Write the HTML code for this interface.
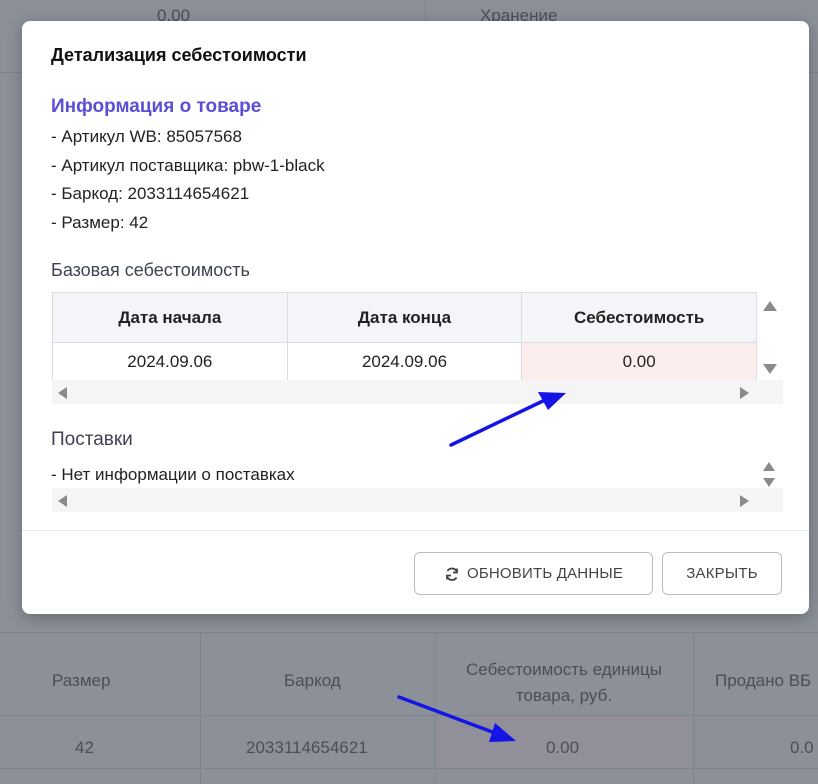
<!DOCTYPE html>
<html><head><meta charset="utf-8">
<style>
*{box-sizing:border-box;margin:0;padding:0}
body{width:818px;height:784px;overflow:hidden;position:relative;background:#8b9099;font-family:"Liberation Sans",sans-serif;color:#222}
.abs{position:absolute}
.bgt{color:#4a4f57;font-size:17px;position:absolute}
.vl{position:absolute;width:1px;background:#7e838c}
.hl{position:absolute;height:1px;background:#7e838c;left:0;width:818px}
.modal{position:absolute;left:22px;top:21px;width:787px;height:593px;background:#fff;border-radius:8px;box-shadow:0 4px 16px rgba(0,0,0,.25)}
.t{position:absolute;font-size:17px;color:#222}
table{border-collapse:collapse;position:absolute;left:30px;top:271px;width:705px;table-layout:fixed}
td,th{border:1px solid #d9dde3;text-align:center;font-size:17px}
th{background:#f3f5f8;height:50px;font-weight:bold;color:#222}
td{height:38px}
.tri{position:absolute;width:0;height:0}
.btn{position:absolute;border:1px solid #b8bec7;border-radius:6px;height:43px;top:531px;font-size:15px;color:#444;display:flex;align-items:center;justify-content:center;letter-spacing:.2px}
</style></head><body>
<div class="bgt" style="left:157px;top:6px">0.00</div>
<div class="bgt" style="left:480px;top:6px">Хранение</div>
<div class="vl" style="left:425px;top:0;height:30px"></div>
<div class="hl" style="top:72px"></div>
<div class="hl" style="top:632px"></div>
<div class="hl" style="top:715px"></div>
<div class="hl" style="top:768px"></div>
<div class="vl" style="left:200px;top:632px;height:152px"></div>
<div class="vl" style="left:435px;top:632px;height:152px"></div>
<div class="vl" style="left:693px;top:632px;height:152px"></div>
<div class="abs" style="left:436px;top:716px;width:257px;height:52px;background:#918f99"></div>
<div class="bgt" style="left:52px;top:671px">Размер</div>
<div class="bgt" style="left:284px;top:671px">Баркод</div>
<div class="bgt" style="left:435px;top:657px;width:258px;text-align:center;line-height:26px">Себестоимость единицы<br>товара, руб.</div>
<div class="bgt" style="left:715px;top:671px;white-space:nowrap">Продано ВБ</div>
<div class="bgt" style="left:75px;top:738px">42</div>
<div class="bgt" style="left:246px;top:738px">2033114654621</div>
<div class="bgt" style="left:546px;top:738px">0.00</div>
<div class="bgt" style="left:790px;top:738px">0.0</div>

<div class="modal">
<div class="t" style="left:29px;top:24px;font-size:18px;font-weight:bold;color:#111">Детализация себестоимости</div>
<div class="t" style="left:29px;top:75px;font-size:19px;font-weight:bold;color:#5a4fd6">Информация о товаре</div>
<div class="t" style="left:29px;top:106px">- Артикул WB: 85057568</div>
<div class="t" style="left:29px;top:135px">- Артикул поставщика: pbw-1-black</div>
<div class="t" style="left:29px;top:163px">- Баркод: 2033114654621</div>
<div class="t" style="left:29px;top:192px">- Размер: 42</div>
<div class="t" style="left:29px;top:239px;font-size:18px;color:#3d4350">Базовая себестоимость</div>
<table><tr><th>Дата начала</th><th>Дата конца</th><th>Себестоимость</th></tr>
<tr><td>2024.09.06</td><td>2024.09.06</td><td style="background:#fdeeee">0.00</td></tr></table>
<div class="abs" style="left:30px;top:359px;width:731px;height:24px;background:#f5f5f5"></div>
<div class="abs" style="left:735px;top:271px;width:26px;height:88px;background:#fff"></div>
<div class="tri" style="left:741px;top:280px;border:7px solid transparent;border-top:0;border-bottom:10px solid #8a8a8a"></div>
<div class="tri" style="left:741px;top:343px;border:7px solid transparent;border-bottom:0;border-top:10px solid #8a8a8a"></div>
<div class="tri" style="left:36px;top:366px;border:6px solid transparent;border-left:0;border-right:9px solid #8a8a8a"></div>
<div class="tri" style="left:718px;top:366px;border:6px solid transparent;border-right:0;border-left:9px solid #8a8a8a"></div>
<div class="t" style="left:29px;top:408px;font-size:19px;color:#3d4350">Поставки</div>
<div class="t" style="left:29px;top:444px">- Нет информации о поставках</div>
<div class="abs" style="left:30px;top:467px;width:731px;height:24px;background:#f5f5f5"></div>
<div class="tri" style="left:741px;top:441px;border:6px solid transparent;border-top:0;border-bottom:9px solid #8a8a8a"></div>
<div class="tri" style="left:741px;top:457px;border:6px solid transparent;border-bottom:0;border-top:9px solid #8a8a8a"></div>
<div class="tri" style="left:36px;top:474px;border:6px solid transparent;border-left:0;border-right:9px solid #8a8a8a"></div>
<div class="tri" style="left:718px;top:474px;border:6px solid transparent;border-right:0;border-left:9px solid #8a8a8a"></div>
<div class="abs" style="left:0;top:509px;width:787px;height:1px;background:#e3e5e9"></div>
<div class="btn" style="left:392px;width:239px">
<svg width="16" height="16" viewBox="0 0 16 16" style="margin-right:7px" fill="none" stroke="#444" stroke-width="1.8"><path d="M13 6.5A5.2 5.2 0 0 0 3.5 5"/><path d="M3 10a5.2 5.2 0 0 0 9.5 1.5"/><path d="M13 2.5v4h-4" /><path d="M3 13.5v-4h4"/></svg>ОБНОВИТЬ ДАННЫЕ</div>
<div class="btn" style="left:640px;width:120px">ЗАКРЫТЬ</div>
</div>

<svg class="abs" style="left:0;top:0" width="818" height="784">
<g stroke="#1414e6" stroke-width="3.5" stroke-linecap="round" fill="#1414e6">
<line x1="451" y1="445" x2="545" y2="400"/>
<polygon points="566,393 538,392 548,410" stroke="none"/>
<line x1="399" y1="697" x2="495" y2="733"/>
<polygon points="516,741 495,723 489,742" stroke="none"/>
</g></svg>
</body></html>
